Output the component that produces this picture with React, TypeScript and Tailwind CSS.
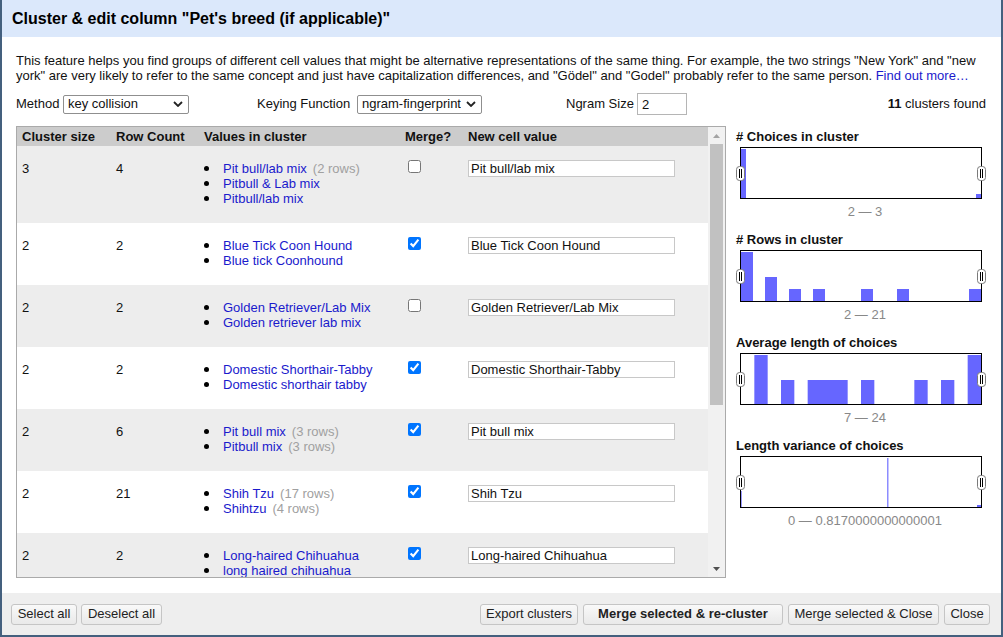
import React from "react";

type Cluster = {
  size: number;
  rows: number;
  values: { text: string; count?: string }[];
  merge: boolean;
  value: string;
};

const clusters: Cluster[] = [
  {
    size: 3,
    rows: 4,
    values: [{ text: "Pit bull/lab mix", count: "(2 rows)" }, { text: "Pitbull & Lab mix" }, { text: "Pitbull/lab mix" }],
    merge: false,
    value: "Pit bull/lab mix",
  },
  {
    size: 2,
    rows: 2,
    values: [{ text: "Blue Tick Coon Hound" }, { text: "Blue tick Coonhound" }],
    merge: true,
    value: "Blue Tick Coon Hound",
  },
  {
    size: 2,
    rows: 2,
    values: [{ text: "Golden Retriever/Lab Mix" }, { text: "Golden retriever lab mix" }],
    merge: false,
    value: "Golden Retriever/Lab Mix",
  },
  {
    size: 2,
    rows: 2,
    values: [{ text: "Domestic Shorthair-Tabby" }, { text: "Domestic shorthair tabby" }],
    merge: true,
    value: "Domestic Shorthair-Tabby",
  },
  {
    size: 2,
    rows: 6,
    values: [
      { text: "Pit bull mix", count: "(3 rows)" },
      { text: "Pitbull mix", count: "(3 rows)" },
    ],
    merge: true,
    value: "Pit bull mix",
  },
  {
    size: 2,
    rows: 21,
    values: [
      { text: "Shih Tzu", count: "(17 rows)" },
      { text: "Shihtzu", count: "(4 rows)" },
    ],
    merge: true,
    value: "Shih Tzu",
  },
  {
    size: 2,
    rows: 2,
    values: [{ text: "Long-haired Chihuahua" }, { text: "long haired chihuahua" }],
    merge: true,
    value: "Long-haired Chihuahua",
  },
];

type Bar = { x: number; w: number; y: number; h: number; fill?: string };

const step = 240 / 18;
const histograms: { title: string; range: string; bars: Bar[] }[] = [
  {
    title: "# Choices in cluster",
    range: "2 — 3",
    bars: [
      { x: 0, w: 5, y: 1, h: 49 },
      { x: 235, w: 5, y: 46, h: 4 },
    ],
  },
  {
    title: "# Rows in cluster",
    range: "2 — 21",
    bars: [
      { x: 0, w: 12, y: 1, h: 49 },
      { x: 24, w: 12, y: 26, h: 24 },
      { x: 48, w: 12, y: 38, h: 12 },
      { x: 72, w: 12, y: 38, h: 12 },
      { x: 120, w: 12, y: 38, h: 12 },
      { x: 156, w: 12, y: 38, h: 12 },
      { x: 228, w: 12, y: 38, h: 12 },
    ],
  },
  {
    title: "Average length of choices",
    range: "7 — 24",
    bars: [
      { x: step * 1, w: step, y: 1, h: 49 },
      { x: step * 3, w: step, y: 26, h: 24 },
      { x: step * 5, w: step * 3, y: 26, h: 24 },
      { x: step * 9, w: step, y: 26, h: 24 },
      { x: step * 13, w: step, y: 26, h: 24 },
      { x: step * 15, w: step, y: 26, h: 24 },
      { x: step * 17, w: step, y: 1, h: 49 },
    ],
  },
  {
    title: "Length variance of choices",
    range: "0 — 0.8170000000000001",
    bars: [
      { x: 0, w: 1, y: 34, h: 16, fill: "#9a9aff" },
      { x: 146, w: 1.5, y: 1, h: 49, fill: "#8c8cff" },
      { x: 236, w: 4, y: 48, h: 2 },
    ],
  },
];

function Chevron() {
  return (
    <svg width="10" height="6" viewBox="0 0 10 6" className="shrink-0">
      <polyline points="1,1 5,5 9,1" fill="none" stroke="#222" strokeWidth="1.8" />
    </svg>
  );
}

function FakeSelect({ value, width }: { value: string; width: string }) {
  return (
    <div
      className={`${width} h-[19px] flex items-center justify-between pl-[4px] pr-[5px] border border-[#8f8f8f] rounded-[2px] bg-white`}
    >
      <span className="truncate">{value}</span>
      <Chevron />
    </div>
  );
}

function Handle({ side }: { side: "left" | "right" }) {
  return (
    <svg
      width="9"
      height="15"
      viewBox="0 0 9 15"
      className={side === "left" ? "absolute top-[18px] -left-[5px]" : "absolute top-[18px] -right-[5px]"}
    >
      <rect x="0.5" y="0.5" width="8" height="14" rx="3" fill="#fff" stroke="#7a7a7a" />
      <line x1="3.5" y1="3" x2="3.5" y2="12" stroke="#000" strokeWidth="1" />
      <line x1="5.5" y1="3" x2="5.5" y2="12" stroke="#000" strokeWidth="1" />
    </svg>
  );
}

function Histogram({ title, range, bars }: { title: string; range: string; bars: Bar[] }) {
  return (
    <div className="mb-[10px]">
      <div className="h-[21px] leading-[21px] font-bold text-[#111]">{title}</div>
      <div className="relative ml-[4px] w-[242px] h-[52px] border border-black bg-white">
        <svg width="240" height="50" viewBox="0 0 240 50" className="block">
          {bars.map((b, i) => (
            <rect key={i} x={b.x} y={b.y} width={b.w} height={b.h} fill={b.fill || "#6666ff"} />
          ))}
        </svg>
        <Handle side="left" />
        <Handle side="right" />
      </div>
      <div className="mt-[5px] leading-[15px] text-center text-[#888] pl-[8px]">{range}</div>
    </div>
  );
}

function Scrollbar() {
  return (
    <div className="w-[17px] flex flex-col bg-[#f1f1f1]">
      <div className="h-[17px] flex items-center justify-center">
        <svg width="7" height="4" viewBox="0 0 7 4">
          <polygon points="0,4 3.5,0 7,4" fill="#a3a3a3" />
        </svg>
      </div>
      <div className="flex-1">
        <div className="mx-[2px] h-[261px] bg-[#c1c1c1]" />
      </div>
      <div className="h-[17px] flex items-center justify-center">
        <svg width="7" height="4" viewBox="0 0 7 4">
          <polygon points="0,0 7,0 3.5,4" fill="#505050" />
        </svg>
      </div>
    </div>
  );
}

function Btn({ children, width, bold }: { children: React.ReactNode; width: string; bold?: boolean }) {
  return (
    <button
      className={`${width} h-[21px] flex items-center justify-center rounded-[3px] border border-[#c5c5c5] bg-gradient-to-b from-[#f9f9f9] to-[#e9e9e9] text-[#222] ${
        bold ? "font-bold" : ""
      }`}
    >
      {children}
    </button>
  );
}

export default function App() {
  return (
    <div
      className="w-[1003px] h-[637px] flex flex-col border-x-2 border-b-2 border-[#44607e] bg-white text-[13px] text-[#111] overflow-hidden"
      style={{ fontFamily: '"Liberation Sans", Arial, sans-serif' }}
    >
      <div className="h-[37px] shrink-0 bg-[#dbe8fb] pl-[10px] flex items-center text-[16px] font-bold text-black">
        Cluster &amp; edit column "Pet's breed (if applicable)"
      </div>

      <div className="px-[14px] pt-[16px]">
        <p className="leading-[15px]">
          This feature helps you find groups of different cell values that might be alternative representations of the
          same thing. For example, the two strings "New York" and "new york" are very likely to refer to the same concept
          and just have capitalization differences, and "Gödel" and "Godel" probably refer to the same person.{" "}
          <a className="text-[#1a1acc]">Find out more…</a>
        </p>

        <div className="mt-[10px] h-[22px] flex items-center">
          <span className="w-[47px]">Method</span>
          <FakeSelect value="key collision" width="w-[126px]" />
          <span className="ml-[68px] w-[100px]">Keying Function</span>
          <FakeSelect value="ngram-fingerprint" width="w-[125px]" />
          <span className="ml-[84px] w-[71px]">Ngram Size</span>
          <input
            className="w-[50px] h-[22px] border border-[#b5b5b5] px-[4px] outline-none"
            defaultValue="2"
          />
          <span className="ml-auto mr-[1px]">
            <b>11</b> clusters found
          </span>
        </div>

        <div className="mt-[11px] flex">
          <div className="w-[710px] h-[452px] border border-[#aaa] flex overflow-hidden">
            <div className="flex-1 overflow-hidden">
              <div className="grid grid-cols-[94px_88px_201px_63px_1fr] h-[19px] leading-[19px] bg-[#ccc] font-bold text-[#111]">
                <div className="pl-[5px]">Cluster size</div>
                <div className="pl-[5px]">Row Count</div>
                <div className="pl-[5px]">Values in cluster</div>
                <div className="pl-[5px]">Merge?</div>
                <div className="pl-[5px]">New cell value</div>
              </div>
              {clusters.map((c, i) => (
                <div
                  key={i}
                  className={`grid grid-cols-[94px_88px_201px_63px_1fr] pt-[14px] pb-[18px] leading-[15px] ${
                    i % 2 === 0 ? "bg-[#ededed]" : "bg-white"
                  }`}
                >
                  <div className="pl-[5px] pt-[1px]">{c.size}</div>
                  <div className="pl-[5px] pt-[1px]">{c.rows}</div>
                  <ul className="pl-[5px] pt-[1px] -mb-[1px]">
                    {c.values.map((v, j) => (
                      <li key={j} className="flex items-center whitespace-nowrap">
                        <span className="w-[5px] h-[5px] rounded-full bg-black mr-[14px] shrink-0" />
                        <a className="text-[#1a1acc]">{v.text}</a>
                        {v.count ? <span className="ml-[6px] text-[#a0a0a0]">{v.count}</span> : null}
                      </li>
                    ))}
                  </ul>
                  <div className="pl-[5px]">
                    <input type="checkbox" defaultChecked={c.merge} className="block ml-[3px] w-[13px] h-[13px]" />
                  </div>
                  <div className="pl-[5px]">
                    <input
                      className="block w-[207px] h-[17px] border border-[#c8c8c8] bg-white px-[2px] outline-none"
                      defaultValue={c.value}
                    />
                  </div>
                </div>
              ))}
            </div>
            <Scrollbar />
          </div>

          <div className="ml-[10px] w-[250px]">
            {histograms.map((h) => (
              <Histogram key={h.title} title={h.title} range={h.range} bars={h.bars} />
            ))}
          </div>
        </div>
      </div>

      <div className="mt-auto h-[42px] shrink-0 bg-[#eee] flex items-center pl-[9px] pr-[11px]">
        <div className="flex gap-[4px]">
          <Btn width="w-[66px]">Select all</Btn>
          <Btn width="w-[81px]">Deselect all</Btn>
        </div>
        <div className="ml-auto flex gap-[5px]">
          <Btn width="w-[98px]">Export clusters</Btn>
          <Btn width="w-[200px]" bold>
            Merge selected &amp; re-cluster
          </Btn>
          <Btn width="w-[151px]">Merge selected &amp; Close</Btn>
          <Btn width="w-[46px]">Close</Btn>
        </div>
      </div>
    </div>
  );
}
